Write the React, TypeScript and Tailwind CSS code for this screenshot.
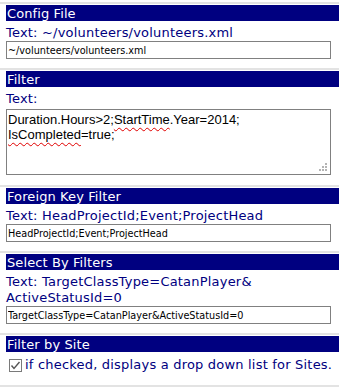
import React from "react";

const verdana = "font-['DejaVu_Sans',Verdana,sans-serif]";
const tahoma = "font-['DejaVu_Sans_Condensed',Tahoma,sans-serif]";

function Rule() {
  return <div className="h-[2px] bg-[#e3e3e3]" />;
}

function Bar({ title }: { title: string }) {
  return (
    <div className={`h-[16px] bg-[#000080] pl-[1px] pt-[1px] text-[13px] leading-[15px] tracking-[0.1px] text-white ${verdana}`}>
      {title}
    </div>
  );
}

function Field({ value }: { value: string }) {
  return (
    <input
      readOnly
      value={value}
      className={`block h-[18px] w-[325px] border border-[#808080] bg-white px-[1px] text-[10.75px] leading-[16px] text-black outline-none ${tahoma}`}
    />
  );
}

function Label({ children }: { children: React.ReactNode }) {
  return (
    <div className={`mt-[4px] text-[13px] leading-[16px] tracking-[0.2px] text-[#000080] ${verdana}`}>{children}</div>
  );
}

export default function App() {
  const squiggle = "underline decoration-wavy decoration-[#e00000] decoration-1 underline-offset-[3px]";
  return (
    <div className="h-[387px] w-[339px] overflow-hidden bg-white pt-[2px]">
      {/* Config File */}
      <Rule />
      <div className="pl-[6px] pt-[1px] pb-[9px]">
        <Bar title="Config File" />
        <Label>Text: ~/volunteers/volunteers.xml</Label>
        <Field value="~/volunteers/volunteers.xml" />
      </div>

      {/* Filter */}
      <Rule />
      <div className="pl-[6px] pt-[1px] pb-[10px]">
        <Bar title="Filter" />
        <Label>Text:</Label>
        <div className="relative mt-[2px] h-[66px] w-[325px] border border-[#808080] bg-white px-[1px] pt-[2px] text-[13px] leading-[15px] text-black font-['Liberation_Sans',Arial,sans-serif]">
          <div>
            Duration.Hours&gt;2;<span className={squiggle}>StartTime</span>.Year=2014;
          </div>
          <div>
            <span className={squiggle}>IsCompleted</span>=true;
          </div>
          <svg className="absolute bottom-[2px] right-[2px]" width="9" height="9" viewBox="0 0 9 9">
            <rect x="6" y="0" width="2" height="2" fill="#b4b4b4" />
            <rect x="3" y="3" width="2" height="2" fill="#b4b4b4" />
            <rect x="6" y="3" width="2" height="2" fill="#b4b4b4" />
            <rect x="0" y="6" width="2" height="2" fill="#b4b4b4" />
            <rect x="3" y="6" width="2" height="2" fill="#b4b4b4" />
            <rect x="6" y="6" width="2" height="2" fill="#b4b4b4" />
          </svg>
        </div>
      </div>

      {/* Foreign Key Filter */}
      <Rule />
      <div className="pl-[6px] pt-[1px] pb-[9px]">
        <Bar title="Foreign Key Filter" />
        <Label>Text: HeadProjectId;Event;ProjectHead</Label>
        <Field value="HeadProjectId;Event;ProjectHead" />
      </div>

      {/* Select By Filters */}
      <Rule />
      <div className="pl-[6px] pt-[1px] pb-[9px]">
        <Bar title="Select By Filters" />
        <Label>
          Text: TargetClassType=CatanPlayer&amp;
          <br />
          ActiveStatusId=0
        </Label>
        <Field value="TargetClassType=CatanPlayer&ActiveStatusId=0" />
      </div>

      {/* Filter by Site */}
      <Rule />
      <div className="pl-[6px] pt-[1px] pb-[12px]">
        <Bar title="Filter by Site" />
        <div className={`mt-[5px] flex h-[16px] items-start pl-[3px] text-[13px] leading-[16px] tracking-[0.2px] text-[#000080] ${verdana}`}>
          <svg className="mt-[2px] shrink-0" width="13" height="13" viewBox="0 0 13 13">
            <rect x="0.5" y="0.5" width="12" height="12" fill="#fff" stroke="#7a7a7a" />
            <polyline points="2.5,6.5 5,9.5 10.5,3" fill="none" stroke="#555" strokeWidth="1.4" />
          </svg>
          <span className="ml-[3px] whitespace-nowrap">if checked, displays a drop down list for Sites.</span>
        </div>
      </div>
      <Rule />
    </div>
  );
}
